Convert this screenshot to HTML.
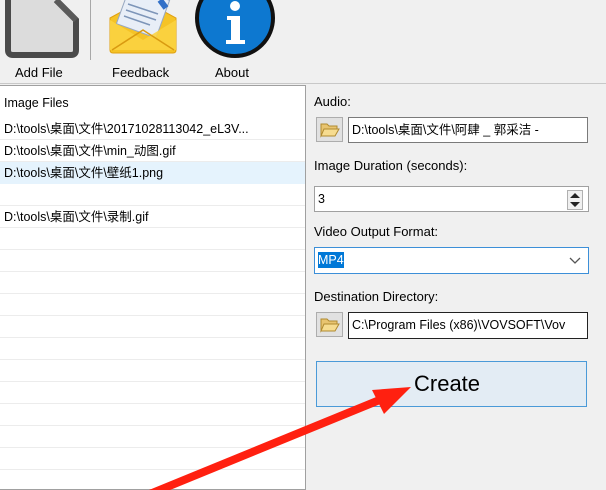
<!DOCTYPE html>
<html><head><meta charset="utf-8"><style>
*{margin:0;padding:0;box-sizing:border-box}
body{width:606px;height:490px;overflow:hidden;background:#f0f0f0;position:relative;font-family:"Liberation Sans","Noto Sans CJK SC",sans-serif;font-size:12px;color:#000}
.abs{position:absolute}
.lbl{position:absolute;font-size:13px;color:#000}
.list{left:0;top:85px;width:306px;height:405px;background:#fff;border:1px solid #a0a0a0;border-left:none}
.row{position:absolute;left:0;width:305px;height:22px;border-bottom:1px solid #ececec;font-size:12.5px;line-height:22px;padding-left:4px;white-space:nowrap}
.inp{position:absolute;background:#fff;border:1px solid #7a7a7a;font-size:12.5px;line-height:20px;padding-left:3px;white-space:nowrap;overflow:hidden}
.fold{position:absolute;width:27px;height:25px;background:#e1e1e1;border:1px solid #adadad}
</style></head><body>
<svg class="abs" style="left:0;top:0" width="300" height="60">
 <path d="M8 0 L8 50 Q8 55 13 55 L71 55 Q76 55 76 50 L76 20 L56 0" fill="#dcdcdc" stroke="#4a4a4a" stroke-width="6"/>
 <path d="M56 0 L76 20" stroke="#5a5a5a" stroke-width="6"/>
 <line x1="90.5" y1="0" x2="90.5" y2="80" stroke="#a8a8a8"/>
 <path d="M110 18 L143 0 L176 18 L176 50 Q176 53 173 53 L113 53 Q110 53 110 50 Z" fill="#f5c326" stroke="#e0a010" stroke-width="1"/>
 <rect x="122" y="-8" width="42" height="40" fill="#e8eef7" stroke="#98a8c0" transform="rotate(20 143 12)"/>
 <path d="M128 4 L158 14 M126 10 L156 20 M124 16 L150 25" stroke="#7d95b8" stroke-width="1.5"/>
 <path d="M160 0 L166 8" stroke="#3270c8" stroke-width="6"/>
 <path d="M110 20 L143 40 L176 20 L176 50 L110 50 Z" fill="#fbd341" opacity="0.9"/>
 <path d="M112 50 L143 30 L174 50" fill="none" stroke="#d99a10" stroke-width="1.5"/>
 <circle cx="235" cy="18" r="38" fill="#0d78d0" stroke="#111" stroke-width="4"/>
 <circle cx="235" cy="6" r="5" fill="#fff"/>
 <path d="M227 16 L240 16 L240 40 L245 40 L245 44 L226 44 L226 40 L231 40 L231 20 L227 20 Z" fill="#fff"/>
</svg>
<div class="lbl" style="left:15px;top:65px">Add File</div>
<div class="lbl" style="left:112px;top:65px">Feedback</div>
<div class="lbl" style="left:215px;top:65px">About</div>
<div class="abs" style="left:0;top:83px;width:606px;height:1px;background:#c8c8c8"></div>
<div class="abs list">
 <div class="row" style="top:6px;height:26px;border:none">Image Files</div>
 <div class="row" style="top:32px">D:\tools\桌面\文件\20171028113042_eL3V...</div>
 <div class="row" style="top:54px">D:\tools\桌面\文件\min_动图.gif</div>
 <div class="row" style="top:76px;background:#e5f3fd;border-bottom-color:#e5f3fd">D:\tools\桌面\文件\壁纸1.png</div>
 <div class="row" style="top:98px"></div>
 <div class="row" style="top:120px">D:\tools\桌面\文件\录制.gif</div>
 <div class="row" style="top:142px"></div><div class="row" style="top:164px"></div><div class="row" style="top:186px"></div>
 <div class="row" style="top:208px"></div><div class="row" style="top:230px"></div><div class="row" style="top:252px"></div>
 <div class="row" style="top:274px"></div><div class="row" style="top:296px"></div><div class="row" style="top:318px"></div>
 <div class="row" style="top:340px"></div><div class="row" style="top:362px"></div>
</div>
<div class="lbl" style="left:314px;top:94px">Audio:</div>
<div class="fold" style="left:316px;top:117px"></div>
<svg class="abs" style="left:320px;top:121px" width="20" height="17"><path d="M1 3 L7 3 L9 5 L17 5 L17 8 L5 8 L1 15 Z" fill="#e8c470" stroke="#b08a30"/><path d="M4 8 L19 8 L15 15 L1 15 Z" fill="#f6dc90" stroke="#b08a30"/></svg>
<div class="inp" style="left:348px;top:117px;width:240px;height:26px;line-height:24px">D:\tools\桌面\文件\阿肆 _ 郭采洁 -</div>
<div class="lbl" style="left:314px;top:158px">Image Duration (seconds):</div>
<div class="inp" style="left:314px;top:186px;width:275px;height:26px;line-height:24px;border-color:#a0a0a0">3</div>
<svg class="abs" style="left:567px;top:190px" width="16" height="20"><rect x="0.5" y="0.5" width="15" height="19" fill="#f0f0f0" stroke="#b0b0b0"/><path d="M3 8 L8 3 L13 8 Z M3 12 L13 12 L8 17 Z" fill="#222"/></svg>
<div class="lbl" style="left:314px;top:224px">Video Output Format:</div>
<div class="inp" style="left:314px;top:247px;width:275px;height:27px;border-color:#3c8fd8;line-height:25px"><span style="background:#0078d7;color:#fff;padding:1px 0">MP4</span></div>
<svg class="abs" style="left:568px;top:256px" width="14" height="10"><path d="M2 2 L7 7 L12 2" fill="none" stroke="#555" stroke-width="1.3"/></svg>
<div class="lbl" style="left:314px;top:289px">Destination Directory:</div>
<div class="fold" style="left:316px;top:312px"></div>
<svg class="abs" style="left:320px;top:316px" width="20" height="17"><path d="M1 3 L7 3 L9 5 L17 5 L17 8 L5 8 L1 15 Z" fill="#e8c470" stroke="#b08a30"/><path d="M4 8 L19 8 L15 15 L1 15 Z" fill="#f6dc90" stroke="#b08a30"/></svg>
<div class="inp" style="left:348px;top:312px;width:240px;height:27px;line-height:25px;border-color:#222">C:\Program Files (x86)\VOVSOFT\Vov</div>
<div class="abs" style="left:316px;top:361px;width:271px;height:46px;background:#e3ecf4;border:1px solid #4a9ad8"></div>
<div class="abs" style="left:414px;top:371px;font-size:22px">Create</div>
<svg class="abs" style="left:0;top:0" width="606" height="490">
 <line x1="140" y1="498" x2="382" y2="399" stroke="#ff2010" stroke-width="8"/>
 <path d="M411 387 L372 390 L384 414 Z" fill="#ff2010"/>
</svg>
</body></html>
